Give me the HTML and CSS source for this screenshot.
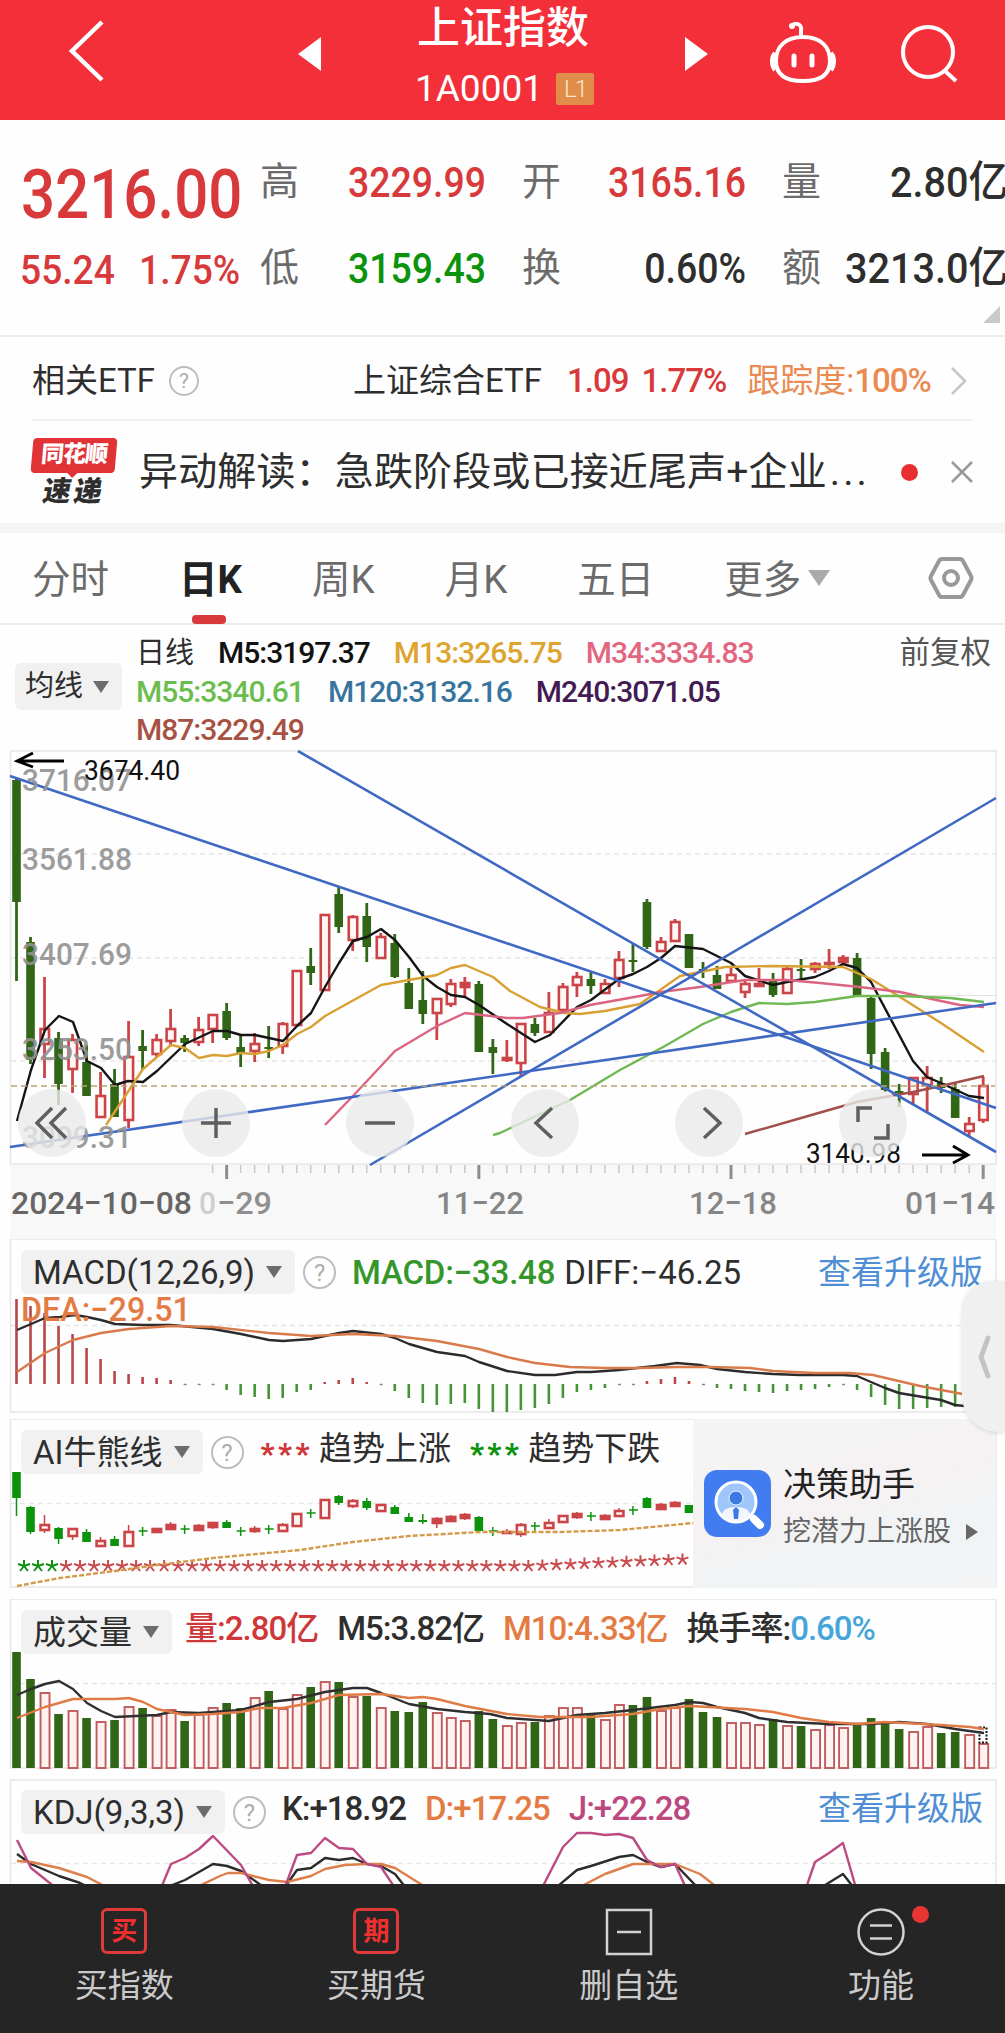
FILE: index.html
```
<!DOCTYPE html>
<html lang="zh-CN">
  <head>
    <meta charset="UTF-8" />
    <title>上证指数 1A0001</title>
    <link rel="stylesheet" href="styles.css">
  </head>
  <body>
    <header class="topbar">
      <svg class="icon-back" viewBox="0 0 36 62"><path d="M34 2 4 31l30 29"></path></svg>
      <svg class="icon-prev" viewBox="0 0 23 34"><path d="M23 0v34L0 17z"></path></svg>
      <div class="title">
        <h1>上证指数</h1>
        <div class="code"><span>1A0001</span><span class="badge">L1</span></div>
      </div>
      <svg class="icon-next" viewBox="0 0 23 34"><path d="M0 0v34l23-17z"></path></svg>
      <svg class="icon-robot" viewBox="0 0 66 62">
        <path d="M22 4a5 5 0 0 1 9 4v7M33 15c17 0 27 9 27 24 0 14-10 20-27 20S6 53 6 39c0-15 10-24 27-24zM5 31c-4 3-4 13 0 17M61 31c4 3 4 13 0 17"></path>
        <circle class="dot" cx="22" cy="4" r="3"></circle>
        <path class="eye" d="M24 34v9M42 34v9"></path>
      </svg>
      <svg class="icon-search" viewBox="0 0 60 60"><circle cx="28" cy="28" r="25"></circle><path d="M45 47l11 10"></path></svg>
    </header>

    <section class="quote">
      <div class="price">3216.00</div>
      <div class="label">高</div><div class="value up">3229.99</div>
      <div class="label">开</div><div class="value up">3165.16</div>
      <div class="label">量</div><div class="value wide">2.80亿</div>
      <div class="change"><span>55.24</span><span>1.75%</span></div>
      <div class="label">低</div><div class="value down">3159.43</div>
      <div class="label">换</div><div class="value">0.60%</div>
      <div class="label">额</div><div class="value wide">3213.0亿</div>
      <i class="corner"></i>
    </section>

    <section class="etf">
      <span>相关ETF</span><span class="help">?</span>
      <span class="etf-name">上证综合ETF</span>
      <span class="num up etf-price">1.09</span>
      <span class="num up etf-rate">1.77%</span>
      <span class="track">跟踪度:<span class="num">100%</span></span>
      <svg class="icon-more" viewBox="0 0 18 30"><path d="M2 2l13 13L2 28"></path></svg>
    </section>

    <section class="news">
      <div class="express"><b class="tag"><span>同花顺</span></b><b class="word">速递</b></div>
      <p>异动解读：急跌阶段或已接近尾声+企业<span class="dots">...</span></p>
      <i class="unread"></i>
      <svg class="icon-close" viewBox="0 0 24 24"><path d="M2 2l20 20M22 2L2 22"></path></svg>
    </section>

    <nav class="tabs">
      <a>分时</a>
      <a class="active">日K</a>
      <a>周K</a>
      <a>月K</a>
      <a>五日</a>
      <a>更多<i class="caret"></i></a>
      <svg class="icon-set" viewBox="0 0 46 44"><path d="M14 3h18q2 0 3 2l8 15q1 2 0 4l-8 15q-1 2-3 2H14q-2 0-3-2L3 24q-1-2 0-4l8-15q1-2 3-2z"></path><circle cx="23" cy="22" r="7"></circle></svg>
    </nav>

    <section class="ma">
      <div class="picker ma-picker">均线<i class="caret"></i></div>
      <div class="ma-list num">
        <div><span class="kind">日线</span><span class="m5">M5:3197.37</span><span class="m13">M13:3265.75</span><span class="m34">M34:3334.83</span></div>
        <div><span class="m55">M55:3340.61</span><span class="m120">M120:3132.16</span><span class="m240">M240:3071.05</span></div>
        <div><span class="m87">M87:3229.49</span></div>
      </div>
      <div class="adjust">前复权</div>
    </section>

    <section class="kline">
      <svg id="kline" class="chart" viewBox="0 750 1005 489"></svg>
      <div class="tools">
        <button aria-label="最早"><svg viewBox="0 0 34 34"><path d="M17 2 2 17l15 15M31 2 16 17l15 15"></path></svg></button>
        <button aria-label="放大"><svg viewBox="0 0 34 34"><path d="M2 17h30M17 2v30"></path></svg></button>
        <button aria-label="缩小"><svg viewBox="0 0 34 34"><path d="M2 17h30"></path></svg></button>
        <button aria-label="左移"><svg viewBox="0 0 34 34"><path d="M24 2 8 17l16 15"></path></svg></button>
        <button aria-label="右移"><svg viewBox="0 0 34 34"><path d="M12 2l16 15-16 15"></path></svg></button>
        <button aria-label="全屏"><svg viewBox="0 0 34 34"><path d="M2 16V2h14M32 18v14H18"></path></svg></button>
      </div>
    </section>

    <section class="panel">
      <svg id="macd" class="chart" viewBox="0 1239 1005 180"></svg>
      <div class="legend">
        <div class="picker">MACD(12,26,9)<i class="caret"></i></div>
        <span class="help">?</span>
        <span class="c-green macd-val">MACD:−33.48</span>
        <span class="diff-val">DIFF:−46.25</span>
        <a class="upgrade">查看升级版</a>
      </div>
      <div class="drawer"><svg viewBox="0 0 14 44"><path d="M11 3 4 22l7 19"></path></svg></div>
    </section>

    <section class="panel">
      <svg id="trend" class="chart" viewBox="0 1419 1005 180"></svg>
      <div class="legend">
        <div class="picker">AI牛熊线<i class="caret"></i></div>
        <span class="help">?</span>
        <span class="stars c-red">***</span><span class="raised">趋势上涨</span>
        <span class="stars c-bright">***</span><span class="raised">趋势下跌</span>
      </div>
      <aside class="helper">
        <svg class="helper-icon" viewBox="0 0 67 67">
          <rect width="67" height="67" rx="13" fill="#417df0"></rect>
          <path d="M50 49l6 6" stroke="#fff" stroke-width="8" stroke-linecap="round"></path>
          <circle cx="32" cy="32" r="20" fill="#9fc5fb" stroke="#fff" stroke-width="3"></circle>
          <path d="M18 45q1-8 14-8t14 8q-6 6-14 6t-14-6z" fill="#f2f7ff"></path>
          <circle cx="32" cy="28" r="7" fill="#3c79e2" stroke="#f2f7ff"></circle>
          <path d="M32 37l3 3-1 9h-4l-1-9z" fill="#3c79e2"></path>
        </svg>
        <div>
          <h3>决策助手</h3>
          <p>挖潜力上涨股<i></i></p>
        </div>
      </aside>
    </section>

    <section class="panel">
      <svg id="volume" class="chart" viewBox="0 1599 1005 180"></svg>
      <div class="legend">
        <div class="picker">成交量<i class="caret"></i></div>
        <span class="num c-red raised vol-val">量:2.80亿</span>
        <span class="num raised vol-m5">M5:3.82亿</span>
        <span class="num raised c-orange vol-m10">M10:4.33亿</span>
        <span class="num raised">换手率:<span class="c-sky">0.60%</span></span>
      </div>
    </section>

    <section class="panel kdj">
      <svg id="kdj" class="chart" viewBox="0 1779 1005 105"></svg>
      <div class="legend">
        <div class="picker">KDJ(9,3,3)<i class="caret"></i></div>
        <span class="help">?</span>
        <span class="num raised k-val">K:+18.92</span>
        <span class="num raised c-orange d-val">D:+17.25</span>
        <span class="num raised c-pink">J:+22.28</span>
        <a class="upgrade raised">查看升级版</a>
      </div>
    </section>

    <footer class="bottombar">
      <a><b class="square">买</b>买指数</a>
      <a><b class="square">期</b>买期货</a>
      <a><svg viewBox="0 0 48 48"><path d="M2 2h44v44H2zM12 24h24"></path></svg>删自选</a>
      <a><svg viewBox="0 0 48 48"><circle cx="24" cy="24" r="22.5"></circle><path d="M13 17.500h22M13 30.500h22"></path></svg>功能<i class="notice"></i></a>
    </footer>

    <script src="charts.js"></script>
  </body>
</html>
```
FILE: styles.css
```
:root {
  --red: #d8393a;
  --text: #2e2e2e;
  --muted: #6b6b6b;
  --line: #ececec;
}

* {
  box-sizing: border-box;
}

body {
  margin: 0;
  width: 1005px;
  overflow: hidden;
  background: #fefefe;
  color: var(--text);
  font-family: Roboto, "Noto Sans CJK SC", sans-serif;
  font-size: 33px;
  line-height: 1;
}

h1,
h3,
p {
  margin: 0;
  font-weight: 400;
}

svg {
  display: block;
  fill: none;
}

i {
  display: block;
}

.num {
  letter-spacing: -1px;
}

.up {
  color: var(--red);
}

.down {
  color: #0b930b;
}

/* Top bar */
.topbar {
  position: relative;
  display: flex;
  height: 120px;
  background: #f32f39;
  color: #fff;
}

.topbar svg {
  flex: none;
  stroke: #fff;
  stroke-width: 4;
}

.topbar .icon-back {
  width: 36px;
  height: 62px;
  margin: 20px 0 0 68px;
  stroke-width: 4.5;
}

.topbar .icon-prev,
.topbar .icon-next {
  width: 23px;
  height: 34px;
  margin-top: 37px;
  fill: #fff;
  stroke: none;
}

.topbar .icon-prev {
  margin-left: 194px;
}

.title {
  width: 364px;
  text-align: center;
}

.title h1 {
  margin-top: 5px;
  font-size: 43px;
  line-height: 46px;
  font-weight: 500;
}

.code {
  display: flex;
  justify-content: center;
  align-items: center;
  gap: 13px;
  margin: 15px 0 0 3px;
  font-size: 37px;
  line-height: 46px;
}

.badge {
  width: 38px;
  height: 32px;
  border-radius: 2px;
  background: #df8d48;
  color: #fbe6d4;
  font-size: 24px;
  line-height: 33px;
  font-weight: 300;
  letter-spacing: -2px;
}

.topbar .icon-robot {
  width: 66px;
  height: 62px;
  margin: 22px 0 0 62px;
}

.icon-robot .dot {
  fill: #fff;
  stroke: none;
}

.icon-robot .eye {
  stroke-width: 5;
  stroke-linecap: round;
}

.topbar .icon-search {
  width: 60px;
  height: 60px;
  margin: 24px 0 0 64px;
}

/* Quote */
.quote {
  position: relative;
  display: grid;
  grid-template-columns: 260px 39px 187px 36px 39px 185px 36px 39px 187px;
  grid-template-rows: 86px 86px;
  height: 217px;
  padding-top: 19px;
  border-bottom: 2px solid var(--line);
  align-items: center;
}

.quote .label {
  font-size: 39px;
  color: var(--muted);
}

.quote .value {
  font-size: 43px;
  font-weight: 500;
  text-align: right;
  white-space: nowrap;
  transform: scaleX(0.87);
  transform-origin: right;
}

.quote .wide {
  transform: scaleX(0.92);
}

.quote .value + .label {
  grid-column: span 2;
  text-align: right;
}

/* narrow digits */
.price {
  width: 246px;
  margin: 25px 0 0 21px;
  font-size: 69px;
  font-weight: 500;
  color: var(--red);
  transform: scaleX(0.87);
  transform-origin: left;
}

.change {
  display: flex;
  gap: 26px;
  width: 230px;
  margin: 5px 0 0 20px;
  font-size: 40px;
  font-weight: 500;
  color: var(--red);
  transform: scaleX(0.93);
  transform-origin: left;
}

.corner {
  position: absolute;
  right: 5px;
  bottom: 12px;
  border-left: 17px solid transparent;
  border-bottom: 17px solid #c9c9c9;
}

/* Related ETF */
.etf {
  display: flex;
  align-items: center;
  height: 84px;
  margin: 0 32px;
  padding-top: 5px;
  border-bottom: 2px solid #f1f1f1;
  white-space: nowrap;
}

.etf .num {
  font-weight: 500;
}

.help {
  flex: none;
  width: 33px;
  height: 33px;
  border: 2px solid #bdbdbd;
  border-radius: 50%;
  color: #adadad;
  font-size: 24px;
  line-height: 30px;
  text-align: center;
}

.etf .help {
  width: 30px;
  height: 30px;
  margin-left: 14px;
  font-size: 21px;
  line-height: 26px;
}

.etf-name {
  margin-left: 154px;
}

.etf-price {
  margin-left: 25px;
}

.etf-rate {
  margin-left: 13px;
}

.track {
  margin-left: 21px;
  color: #e98b52;
}

.icon-more {
  width: 18px;
  height: 30px;
  margin-left: auto;
  margin-right: 5px;
  stroke: #c6c6c6;
  stroke-width: 2.5;
}

/* News */
.news {
  display: flex;
  align-items: center;
  height: 112px;
  padding: 0 31px 0 32px;
  border-bottom: 10px solid #f4f4f4;
}

.express {
  width: 84px;
}

.express b {
  display: block;
  text-align: center;
  font-weight: 900;
}

.express .tag {
  position: relative;
  height: 35px;
  border-radius: 4px;
  background: #e13236;
  color: #fff;
  font-size: 23px;
  line-height: 34px;
  letter-spacing: -1px;
  transform: skewX(-5deg);
}

.express .tag::after {
  content: "";
  position: absolute;
  left: 36px;
  top: 34px;
  border: 6px solid transparent;
  border-top-color: #e13236;
}

.express .word {
  margin-top: 5px;
  font-size: 28px;
  line-height: 28px;
  letter-spacing: 3px;
  transform: skewX(-10deg);
}

.news p {
  margin-left: 23px;
  font-size: 39px;
  line-height: 50px;
  letter-spacing: 0.15px;
  white-space: nowrap;
}

.dots {
  margin-left: 3px;
  letter-spacing: 3px;
}

.unread {
  width: 17px;
  height: 17px;
  margin-left: auto;
  border-radius: 50%;
  background: #e72f30;
}

.icon-close {
  width: 24px;
  height: 24px;
  margin-left: 32px;
  stroke: #999;
  stroke-width: 2.5;
}

/* Period tabs */
.tabs {
  display: flex;
  align-items: center;
  height: 92px;
  padding: 0 31px 0 32px;
  border-bottom: 2px solid var(--line);
  color: var(--muted);
  font-size: 38.5px;
}

.tabs a {
  position: relative;
  display: flex;
  align-items: center;
  height: 90px;
  margin-right: 70px;
  padding-top: 5px;
}

.tabs .active {
  color: #222;
  font-weight: 700;
}

.tabs .active::after {
  content: "";
  position: absolute;
  left: 50%;
  bottom: -1px;
  width: 34px;
  height: 9px;
  margin-left: -19px;
  border-radius: 4px;
  background: var(--red);
}

.caret {
  flex: none;
  border: 8.5px solid transparent;
  border-top: 12px solid #6c6c6c;
  border-bottom: 0;
}

.tabs .caret {
  margin: -5px 0 0 7px;
  border-width: 16px 11px 0;
  border-top-color: #aaa;
}

.icon-set {
  width: 46px;
  height: 44px;
  margin-left: auto;
  stroke: #999;
  stroke-width: 4;
}

/* Moving averages */
.ma {
  display: flex;
  height: 125px;
  font-size: 30px;
}

.picker {
  display: flex;
  align-items: center;
  gap: 11px;
  height: 44px;
  padding: 0 13px 0 12px;
  border-radius: 6px;
  background: #f1f1f1;
  white-space: nowrap;
}

.ma-picker {
  gap: 10px;
  width: 107px;
  height: 47px;
  margin: 38px 0 0 15px;
  padding: 0 0 0 10px;
  font-size: 29px;
}

.ma-list {
  margin: 9px 0 0 14px;
  font-weight: 500;
}

.ma-list div {
  display: flex;
  gap: 24px;
  height: 38.5px;
  line-height: 38px;
}

.ma-list .kind {
  font-size: 29px;
  font-weight: 400;
  letter-spacing: 0;
}

.m5 {
  color: #111;
}

.m13 {
  color: #dda52f;
}

.m34 {
  color: #e3657f;
}

.m55 {
  color: #6cbd50;
}

.m120 {
  color: #3775a0;
}

.m240 {
  color: #431b52;
}

.m87 {
  color: #a75143;
}

.adjust {
  margin: 9px 14px 0 auto;
  color: #555;
  font-size: 30.5px;
  line-height: 38px;
}

/* Charts */
.kline,
.panel {
  position: relative;
}

.kline {
  height: 489px;
}

.panel {
  height: 180px;
}

.chart {
  position: absolute;
  inset: 0;
  width: 1005px;
  height: 100%;
}

.chart text {
  font-family: Roboto, sans-serif;
}

.tools {
  position: relative;
  display: flex;
  justify-content: space-between;
  padding: 339px 98px 0 18px;
}

.tools button {
  width: 68px;
  height: 68px;
  padding: 17px;
  border: 0;
  border-radius: 50%;
  background: rgba(234, 234, 234, 0.8);
}

.tools svg {
  stroke: #5f5f5f;
  stroke-width: 3.5;
}

.legend {
  position: relative;
  display: flex;
  align-items: center;
  height: 44px;
  margin: 0 21px;
  top: 11px;
  white-space: nowrap;
}

.legend .help {
  margin: 0 16px 0 8px;
}

.raised {
  margin-top: -8px;
}

.legend .upgrade {
  margin-left: auto;
  margin-right: 1px;
  color: #4e8ed4;
}

.c-green {
  color: #35972b;
}

.c-bright {
  color: #0b930b;
}

.c-red {
  color: #cf383b;
}

.c-orange {
  color: #e47b44;
}

.c-sky {
  color: #46a5d8;
}

.c-pink {
  color: #bd477f;
}

.macd-val {
  margin-right: 9px;
  font-weight: 500;
  letter-spacing: -0.2px;
}

.stars {
  margin: 3px 6px 0 1px;
  font-size: 30px;
  font-weight: 900;
  letter-spacing: 3.5px;
}

.raised + .stars {
  margin-left: 19px;
}

.vol-val {
  margin-left: 13px;
}

.legend .num {
  font-weight: 500;
}

.vol-val,
.vol-m5,
.vol-m10,
.k-val,
.d-val {
  margin-right: 19px;
}

.drawer {
  position: absolute;
  z-index: 2;
  right: 0;
  top: 42px;
  width: 43px;
  height: 151px;
  padding: 54px 0 0 15px;
  border-radius: 30px 0 0 36px;
  background: #f0f0f0;
  box-shadow: 0 1px 4px rgba(0, 0, 0, 0.12);
}

.drawer svg {
  width: 14px;
  height: 44px;
  stroke: #c3c3c3;
  stroke-width: 5;
  stroke-linecap: round;
  stroke-linejoin: round;
}

.helper {
  position: absolute;
  right: 9px;
  top: 0;
  display: flex;
  gap: 12px;
  width: 303px;
  height: 169px;
  padding: 51px 0 0 11px;
  background: linear-gradient(165deg, #f4f4f5 20%, #f6f1f2 45%, #f0f4f5 70%, #f4f4f5);
}

.helper-icon {
  flex: none;
  width: 67px;
  height: 67px;
}

.helper h3 {
  margin-top: -4px;
  font-size: 33px;
  line-height: 38px;
  color: #222;
}

.helper p {
  display: flex;
  align-items: center;
  margin-top: 11px;
  font-size: 28px;
  line-height: 34px;
  color: #666;
  white-space: nowrap;
}

.helper i {
  margin-left: 15px;
  border: 8px solid transparent;
  border-left: 12px solid #666;
  border-right: 0;
}

.kdj {
  height: 105px;
  overflow: hidden;
}

/* Bottom bar */
.bottombar {
  display: grid;
  grid-template-columns: repeat(4, 252.3px);
  height: 149px;
  padding-top: 24px;
  margin-left: -2px;
  width: 1010px;
  background: #252525;
  color: #cacaca;
}

.bottombar a {
  position: relative;
  display: flex;
  flex-direction: column;
  align-items: center;
  gap: 13px;
  line-height: 38px;
}

.square {
  width: 46px;
  height: 46px;
  border: 3px solid #e03a3b;
  border-radius: 6px;
  color: #f0302f;
  font-size: 26px;
  line-height: 40px;
  text-align: center;
}

.bottombar svg {
  width: 48px;
  height: 48px;
  margin-bottom: -2px;
  stroke: #d2d2d2;
  stroke-width: 2.5;
}

.notice {
  position: absolute;
  left: 157px;
  top: -2px;
  width: 17px;
  height: 17px;
  border-radius: 50%;
  background: #ea3434;
}
```
FILE: charts.js
```
const STEP = 14.01;
const X0 = 16.5;
const RED = "#cb4548";
const GREEN = "#306616";
const BRIGHT = "#0b930b";

const cx = (i) => X0 + i * STEP;

// [direction, high, body top, body bottom, low]
const candles = [
  ["d", 779, 780, 902, 981], ["d", 937, 942, 1060, 1064], ["u", 977, 1028, 1045, 1078], ["d", 1032, 1038, 1084, 1105],
  ["u", 1034, 1039, 1070, 1093], ["d", 1045, 1062, 1096, 1096], ["u", 1072, 1095, 1118, 1118], ["d", 1069, 1084, 1117, 1117],
  ["u", 1021, 1056, 1121, 1128], ["d", 1030, 1046, 1051, 1070], ["u", 1034, 1039, 1055, 1058], ["u", 1009, 1028, 1042, 1045],
  ["d", 1035, 1038, 1043, 1052], ["u", 1017, 1029, 1043, 1046], ["u", 1014, 1014, 1030, 1043], ["d", 1003, 1011, 1038, 1040],
  ["d", 1035, 1047, 1053, 1067], ["u", 1033, 1043, 1052, 1062], ["d", 1026, 1047, 1048, 1058], ["u", 1022, 1023, 1047, 1054],
  ["u", 970, 970, 1026, 1026], ["d", 948, 966, 973, 985], ["u", 914, 914, 991, 991], ["d", 887, 894, 927, 933],
  ["u", 915, 916, 941, 951], ["d", 903, 916, 947, 962], ["u", 933, 936, 959, 959], ["d", 934, 943, 977, 978],
  ["d", 968, 983, 1009, 1009], ["d", 971, 1000, 1014, 1024], ["u", 998, 998, 1014, 1040], ["u", 979, 983, 1005, 1007],
  ["u", 977, 982, 988, 997], ["d", 981, 984, 1052, 1052], ["d", 1039, 1047, 1053, 1074], ["u", 1040, 1057, 1061, 1062],
  ["u", 1023, 1023, 1064, 1077], ["d", 1018, 1024, 1033, 1036], ["u", 992, 1012, 1033, 1033], ["u", 983, 986, 1011, 1011],
  ["u", 972, 976, 986, 997], ["d", 972, 979, 986, 994], ["u", 979, 983, 994, 994], ["u", 951, 959, 979, 987],
  ["d", 943, 960, 962, 972], ["d", 899, 902, 947, 949], ["u", 937, 941, 952, 952], ["u", 919, 921, 942, 942],
  ["d", 934, 934, 968, 968], ["d", 962, 969, 972, 978], ["d", 966, 975, 989, 989], ["u", 967, 974, 982, 982],
  ["u", 980, 983, 993, 998], ["u", 968, 983, 987, 987], ["d", 973, 980, 995, 997], ["u", 967, 968, 994, 994],
  ["d", 959, 969, 971, 980], ["u", 962, 963, 970, 973], ["u", 949, 962, 965, 969], ["u", 955, 957, 963, 965],
  ["d", 953, 958, 996, 996], ["d", 997, 998, 1054, 1069], ["d", 1048, 1052, 1090, 1092], ["d", 1084, 1091, 1092, 1107],
  ["u", 1077, 1077, 1095, 1105], ["u", 1066, 1077, 1086, 1112], ["d", 1077, 1083, 1088, 1093], ["d", 1084, 1089, 1118, 1118],
  ["u", 1117, 1123, 1132, 1137], ["u", 1077, 1085, 1121, 1123],
];

// small candles of the trend panel; "+" is a doji at one level
const trendCandles = [
  ["d", 1472, 1472, 1498, 1516], ["d", 1506, 1507, 1532, 1534], ["u", 1515, 1524, 1531, 1533], ["d", 1527, 1528, 1539, 1544],
  ["u", 1528, 1528, 1537, 1540], ["d", 1529, 1532, 1542, 1542], ["u", 1537, 1540, 1547, 1547], ["d", 1536, 1539, 1546, 1546],
  ["u", 1525, 1531, 1547, 1547], ["+", 1531], ["u", 1528, 1528, 1533, 1533], ["u", 1522, 1524, 1530, 1530],
  ["+", 1529], ["u", 1524, 1525, 1531, 1531], ["u", 1522, 1522, 1528, 1529], ["d", 1520, 1522, 1528, 1528],
  ["+", 1531], ["u", 1526, 1528, 1532, 1533], ["+", 1529], ["u", 1523, 1524, 1532, 1532],
  ["u", 1513, 1513, 1527, 1527], ["+", 1513], ["u", 1499, 1499, 1519, 1519], ["d", 1495, 1496, 1503, 1505],
  ["u", 1499, 1500, 1507, 1508], ["d", 1498, 1501, 1508, 1510], ["u", 1504, 1504, 1512, 1512], ["d", 1505, 1507, 1514, 1514],
  ["d", 1513, 1517, 1522, 1522], ["d", 1514, 1520, 1522, 1524], ["u", 1517, 1518, 1524, 1528], ["u", 1515, 1516, 1522, 1522],
  ["u", 1513, 1514, 1519, 1520], ["d", 1516, 1517, 1531, 1531], ["+", 1531], ["u", 1529, 1531, 1534, 1534],
  ["u", 1523, 1524, 1535, 1537], ["+", 1526], ["u", 1519, 1522, 1529, 1529], ["u", 1515, 1515, 1523, 1523],
  ["u", 1512, 1513, 1518, 1519], ["+", 1516], ["u", 1514, 1515, 1520, 1520], ["u", 1508, 1510, 1517, 1517],
  ["+", 1510], ["d", 1497, 1498, 1508, 1508], ["u", 1503, 1504, 1510, 1510], ["u", 1501, 1502, 1507, 1507],
  ["d", 1505, 1505, 1513, 1513],
];

const macdEnds = [
  1299, 1306, 1313, 1326, 1334, 1348, 1359, 1371, 1374, 1377, 1378, 1380, 0, 0, 0, 1390, 1395, 1397, 1399, 1398, 1392, 1390,
  1382, 1380, 1378, 1382, 0, 1391, 1398, 1403, 1405, 1404, 1403, 1409, 1412, 1412, 1410, 1408, 1404, 1398, 1392, 1390, 1388,
  0, 0, 1381, 1379, 1377, 1381, 0, 1388, 1389, 1391, 1392, 1393, 1391, 1390, 1389, 1387, 0, 1390, 1397, 1405, 1409, 1409,
  1408, 1407, 1407,
];

const volumeTops = [
  1652, 1679, 1692, 1714, 1710, 1718, 1721, 1720, 1706, 1708, 1715, 1709, 1721, 1714, 1707, 1703, 1708, 1697, 1691, 1708,
  1694, 1687, 1681, 1682, 1696, 1696, 1707, 1711, 1712, 1702, 1712, 1717, 1720, 1711, 1719, 1725, 1722, 1722, 1715, 1707,
  1707, 1714, 1719, 1704, 1705, 1697, 1710, 1707, 1699, 1712, 1717, 1722, 1722, 1724, 1719, 1725, 1726, 1729, 1724, 1727,
  1725, 1718, 1724, 1729, 1731, 1726, 1733, 1732, 1734, 1743,
];

const line = (points, color, width = 2.4, extra = "") =>
  `<polyline points="${points}" fill="none" stroke="${color}" stroke-width="${width}" stroke-linejoin="round" ${extra}/>`;

const dash = (y, color = "#e6e6e6", pattern = "5 4", x2 = 995) =>
  `<path d="M11 ${y}H${x2}" stroke="${color}" stroke-width="1.5" stroke-dasharray="${pattern}"/>`;

const frame = (y, height) =>
  `<rect x="10.5" y="${y}" width="985.500" height="${height}" stroke="#e6e6e6" stroke-width="1.5"/>`;

const label = (x, y, width, size, color, text, extra = 'font-weight="500"') =>
  `<text x="${x}" y="${y}" textLength="${width}" lengthAdjust="spacingAndGlyphs" font-size="${size}" fill="${color}" ${extra}>${text}</text>`;

const candle = ([dir, high, top, bottom, low], i, green, wick) => {
  const x = cx(i);
  if (dir === "+") {
    return `<path d="M${x - 4} ${high}h9M${x} ${high - 4}v9" stroke="${green}" stroke-width="1.5"/>`;
  }
  const h = Math.max(bottom - top, 2);
  if (dir === "d") {
    return `<path d="M${x} ${high}V${low}" stroke="${green}" stroke-width="${wick}"/>
      <rect x="${x - 4.3}" y="${top}" width="8.600" height="${h}" fill="${green}"/>`;
  }
  return `<path d="M${x} ${high}V${top}M${x} ${bottom}V${low}" stroke="${RED}" stroke-width="${wick}"/>
    <rect x="${x - 4}" y="${top + 1}" width="8.500" height="${Math.max(h - 2, 1)}" fill="${h > 6 ? "#fff6f5" : RED}" stroke="${RED}" stroke-width="2.600"/>`;
};

function drawKline() {
  let s = `<rect x="10" y="1164" width="986" height="75" fill="#f8f8f8"/>`;
  s += frame(751, 413) + dash(854) + dash(958) + dash(1061);
  s += `<path d="M850 995.500H996" stroke="#e3e3e3"/>`;
  candles.forEach((c, i) => (s += candle(c, i, GREEN, 2.8)));
  s += line("17,1121 31,1070 45,1030 59,1016 73,1022 87,1061 101,1068 115,1085 128,1081 143,1082 157,1071 185,1044 213,1031 227,1031 241,1035 255,1035 283,1041 297,1026 311,1013 325,987 339,963 353,941 367,937 381,929 395,940 409,957 423,976 437,987 451,995 465,997 479,1005 507,1024 535,1042 550,1035 577,1007 591,1000 619,979 633,974 647,967 661,958 675,946 703,949 731,963 745,976 773,985 787,982 815,977 829,971 843,964 857,968 871,982 913,1061 927,1077 941,1083 969,1096 984,1098", "#151515");
  s += line("106,1125 143,1069 171,1045 185,1048 199,1058 213,1055 227,1056 241,1053 255,1054 269,1051 283,1045 297,1034 311,1027 325,1016 381,985 409,980 437,975 451,968 465,965 493,977 510,991 540,1007 565,1013 580,1014 605,1011 640,1004 660,990 680,976 700,972 725,967 770,966 843,967 871,979 900,997 941,1023 984,1052", "#d9a033");
  s += line("325,1125 353,1096 395,1051 437,1026 465,1013 507,1018 523,1018 560,1013 590,1005 640,996 661,992 700,987 745,980 787,980 820,983 860,987 900,992 941,1001 960,1005 984,1007", "#dc6480");
  s += line("493,1135 500,1133 570,1100 620,1070 665,1046 703,1024 731,1012 759,1003 787,1004 815,1002 857,996 900,996 950,998 984,1002", "#70b854");
  s += line("745,1134 815,1114 857,1102 913,1092 941,1086 984,1076", "#a04f49");
  ["10,776 996,1108", "298,751 996,1152", "370,1165 996,798", "10,1147 996,1003"].forEach((p) => (s += line(p, "#4069c4", 2.6)));
  s += dash(1086, "#b8a374", "6 4");

  [["3716.07", 791], ["3561.88", 870], ["3407.69", 965], ["3253.50", 1060], ["3099.31", 1148]].forEach(([t, y]) => {
    s += label(22, y, 110, 32, "#929292", t, 'opacity="0.9" font-weight="500"');
  });
  s += `<path d="M64 761H17M33 753L17 761l16 6M922 1155h46M953 1146l15 9-15 8" stroke="#000" stroke-width="2.800"/>`;
  s += label(84, 780, 96, 28, "#111", "3674.40", 'font-weight="400"');
  s += label(806, 1163, 95, 28, "#111", "3140.98", 'font-weight="400"');

  for (let i = 14; i < 70; i++) {
    const major = [15, 33, 51, 69].includes(i);
    s += `<path d="M${cx(i)} 1165v${major ? 14 : 8}" stroke="${major ? "#8d8d8d" : "#c9c9c9"}" stroke-width="${major ? 3 : 1.500}"/>`;
  }
  s += label(11, 1214, 181, 32, "#666", "2024−10−08");
  s += label(199, 1214, 17, 32, "#cfcfcf", "0") + label(217, 1214, 55, 32, "#8f8f8f", "−29");
  s += label(436, 1214, 88, 32, "#868686", "11−22");
  s += label(689, 1214, 88, 32, "#868686", "12−18");
  s += label(905, 1214, 90, 32, "#868686", "01−14");
  document.getElementById("kline").innerHTML = s;
}

function drawMacd() {
  let s = frame(1239, 173) + dash(1325.5);
  macdEnds.forEach((y, i) => {
    if (y) {
      s += `<path d="M${cx(i)} 1384V${y}" stroke="${y < 1384 ? "#b8474a" : "#469438"}" stroke-width="2.600"/>`;
    } else {
      s += `<path d="M${cx(i) - 1} 1384.500h3" stroke="#888" stroke-width="1.500"/>`;
    }
  });
  s += line("17,1330 45,1318 60,1317 75,1315 87,1317 101,1320 115,1324 143,1325 171,1325 213,1329 241,1334 269,1340 283,1341 311,1339 339,1333 353,1331 381,1334 395,1338 409,1344 437,1352 465,1356 479,1362 507,1371 535,1375 555,1375 577,1372 591,1372 619,1370 655,1366 677,1363 700,1365 717,1369 745,1372 773,1374 800,1375 843,1375 857,1376 885,1388 899,1393 941,1400 955,1405 984,1408", "#2b2b2b");
  s += line("17,1372 45,1353 73,1340 101,1333 129,1329 171,1326 213,1327 269,1333 311,1336 353,1334 395,1336 437,1341 479,1349 507,1357 535,1363 570,1367 605,1368 640,1368 677,1367 710,1367 750,1368 773,1371 815,1373 850,1373 873,1375 920,1386 984,1398", "#d97a4b");
  s += label(21, 1321, 170, 33, "#e47b44", "DEA:−29.51");
  document.getElementById("macd").innerHTML = s;
}

function drawTrend() {
  let s = frame(1419, 168) + dash(1503.5);
  trendCandles.forEach((c, i) => (s += candle(c, i, BRIGHT, 1.5)));
  for (let i = 0; i < 48; i++) {
    const x = 24 + i * STEP;
    const y = i < 36 ? 1566 : 1566 - (i - 36) * 0.6;
    s += `<path d="M${x} ${y - 6}v6l-6-2m6 2l6-2m-6 2l-4 5m4-5l4 5" stroke="${i < 3 ? "#0f8f14" : "#c94a4d"}" stroke-width="2"/>`;
  }
  s += line("17,1586 60,1578 115,1571 150,1566 213,1558 300,1550 353,1542 409,1536 480,1532 560,1532 620,1530 693,1523", "#d29a4a", 2.4, 'stroke-dasharray="5 2"');
  document.getElementById("trend").innerHTML = s;
}

function drawVolume() {
  let s = frame(1599, 169) + dash(1683.5);
  volumeTops.forEach((y, i) => {
    const x = cx(i);
    s += candles[i][0] === "d"
      ? `<rect x="${x - 4.3}" y="${y}" width="8.600" height="${1768 - y}" fill="${GREEN}"/>`
      : `<rect x="${x - 4}" y="${y + 1}" width="9" height="${1767 - y}" fill="#fff3f2" stroke="#c05a5c" stroke-width="1.900"/>`;
  });
  // projected volume of the running session
  s += `<rect x="979.500" y="1727.500" width="7" height="15" fill="#fff" stroke="#111" stroke-width="2" stroke-dasharray="2 1.500"/>`;
  s += line("17,1695 31,1689 45,1684 59,1681 73,1689 87,1703 101,1711 115,1717 157,1715 171,1712 199,1713 241,1710 269,1702 297,1699 325,1692 353,1688 367,1688 381,1693 409,1704 437,1709 465,1712 490,1714 507,1718 549,1721 577,1715 605,1713 633,1710 675,1705 690,1702 703,1703 717,1707 745,1713 759,1718 787,1722 829,1724 871,1724 899,1722 927,1724 955,1729 984,1733", "#2f2f2f");
  s += line("17,1718 45,1707 73,1699 115,1699 129,1698 143,1702 157,1709 185,1715 213,1714 241,1712 260,1708 283,1708 311,1703 339,1695 381,1694 409,1698 423,1697 437,1699 465,1706 507,1714 540,1717 590,1717 633,1714 661,1709 690,1706 745,1709 773,1712 801,1718 829,1722 857,1724 885,1722 941,1725 970,1727 984,1729", "#e07b45");
  document.getElementById("volume").innerHTML = s;
}

function drawKdj() {
  let s = frame(1780, 160) + dash(1863.5);
  [
    "17,1854 31,1864 59,1876 80,1883 90,1888", "165,1888 185,1880 213,1864 227,1866 241,1871 265,1888",
    "285,1887 297,1870 311,1868 325,1858 339,1860 353,1858 367,1864 381,1866 395,1874 406,1888",
    "558,1886 577,1870 591,1866 619,1857 633,1855 647,1862 661,1867 675,1864 698,1888", "822,1887 843,1874 854,1888",
  ].forEach((p) => (s += line(p, "#2b2b2b")));
  [
    "17,1861 31,1862 59,1868 87,1877 108,1888",
    "197,1887 220,1876 228,1873 241,1873 269,1880 287,1882 311,1876 325,1869 345,1865 367,1864 381,1864 395,1868 427,1888",
    "578,1888 605,1874 633,1864 675,1864 700,1874 718,1888",
  ].forEach((p) => (s += line(p, "#dd7f4a")));
  [
    "17,1840 31,1868 56,1888", "161,1888 171,1864 185,1858 199,1849 213,1836 241,1865 254,1888",
    "285,1887 297,1855 311,1853 325,1838 339,1848 353,1849 367,1864 381,1867 395,1888",
    "542,1888 563,1847 577,1833 591,1833 605,1835 619,1834 633,1838 647,1860 661,1867 675,1864 686,1888",
    "806,1888 815,1862 829,1853 843,1843 856,1888",
  ].forEach((p) => (s += line(p, "#bb4b82")));
  document.getElementById("kdj").innerHTML = s;
}

drawKline();
drawMacd();
drawTrend();
drawVolume();
drawKdj();
```
